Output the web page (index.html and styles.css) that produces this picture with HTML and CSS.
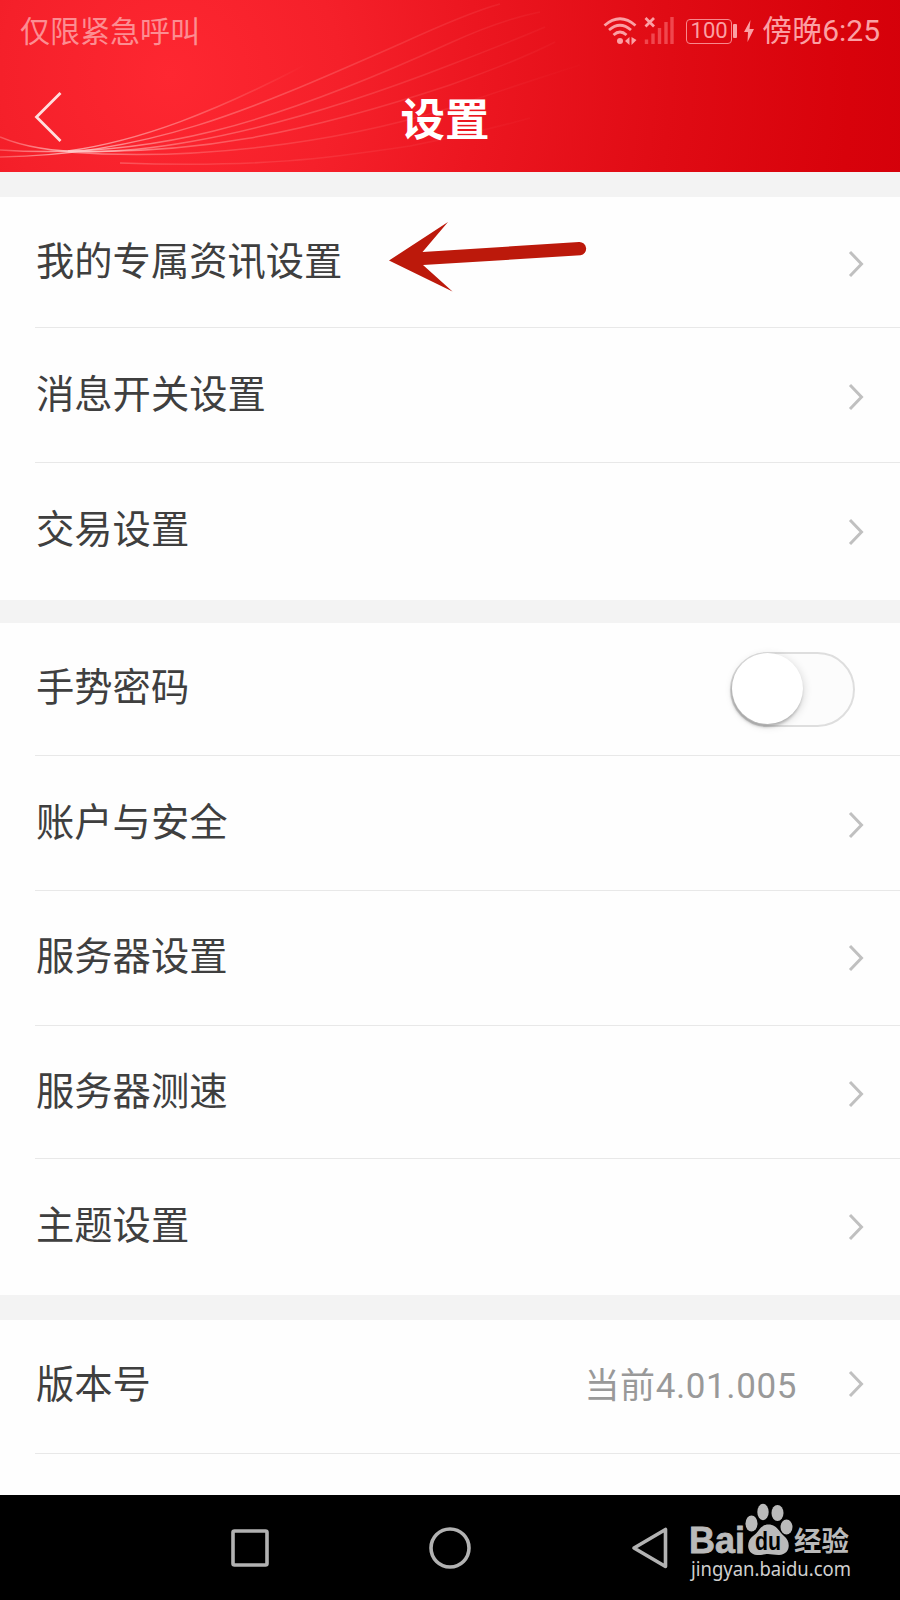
FILE: index.html
```html
<!DOCTYPE html>
<html lang="zh-CN">
<head>
    <meta charset="UTF-8">
    <title>设置</title>
    <link rel="stylesheet" href="styles.css">
</head>
<body>
<svg class="defs" width="0" height="0">
    <symbol id="chevron" viewBox="0 0 16 28">
        <path d="M2 2L13.500 14L2 26" fill="none" stroke="#c0c0c0" stroke-width="3"/>
    </symbol>
</svg>
<div id="phone">
    <div id="header">
        <svg class="waves" width="900" height="172" viewBox="0 0 900 172">
            <defs>
                <linearGradient id="fade" gradientUnits="userSpaceOnUse" x1="0" y1="0" x2="600" y2="0">
                    <stop offset="0" stop-color="#ffb0b0" stop-opacity=".35"/>
                    <stop offset=".12" stop-color="#ffc8c8" stop-opacity=".85"/>
                    <stop offset=".3" stop-color="#ff9a9a" stop-opacity=".55"/>
                    <stop offset=".65" stop-color="#ff8080" stop-opacity=".25"/>
                    <stop offset="1" stop-color="#ff8080" stop-opacity="0"/>
                </linearGradient>
                <linearGradient id="fade2" gradientUnits="userSpaceOnUse" x1="60" y1="0" x2="305" y2="0">
                    <stop offset="0" stop-color="#ffc8c8" stop-opacity=".8"/>
                    <stop offset=".5" stop-color="#ffa0a0" stop-opacity=".55"/>
                    <stop offset="1" stop-color="#ff8080" stop-opacity="0"/>
                </linearGradient>
            </defs>
            <g fill="none" stroke="url(#fade)" stroke-width="1.5">
                <path d="M68 151C140 141 215 112 305 65" stroke="url(#fade2)"/>
                <path d="M0 157C150 155 250 110 400 44Q470 12 500 4"/>
                <path d="M0 150C150 160 270 125 450 43Q500 20 540 12"/>
                <path d="M0 137C90 175 270 135 450 65Q510 42 545 27"/>
                <path d="M68 151C190 155 300 135 450 85Q520 60 555 42"/>
                <path d="M68 152C190 161 330 145 450 108Q520 84 580 65" opacity=".7"/>
                <path d="M120 163C260 168 330 158 410 146Q480 132 530 118" opacity=".5"/>
            </g>
        </svg>
        <div class="status">
            <span class="carrier">仅限紧急呼叫</span>
            <div class="tray">
                <svg width="76" height="32" viewBox="0 0 76 32">
                    <g fill="none" stroke="#fba0a4" stroke-width="2.8">
                        <path d="M1.500 10.500Q17 -3 32.500 10.500"/>
                        <path d="M6 15Q17 5.500 28 15"/>
                        <path d="M10.500 20Q17 14 23.500 20"/>
                    </g>
                    <circle cx="17" cy="26" r="3" fill="#fba0a4"/>
                    <path d="M22 26L26.500 22V30ZM28.500 22L33.500 25L28.500 30Z" fill="#fba0a4"/>
                    <path d="M42.500 3L51 11.500M51 3L42.500 11.500" stroke="#fba0a4" stroke-width="2.8"/>
                    <path d="M43.500 24.500V29M50 18.500V29M56.500 13V29M63 7V29M69 2V29" stroke="#f0474e" stroke-width="3.4"/>
                </svg>
                <span class="battery">100</span>
                <span class="cap"></span>
                <svg class="bolt" width="10" height="22" viewBox="0 0 10 22"><path d="M6.500 0L0 12H4L3.500 22L10 9H5.500Z" fill="#fba0a4"/></svg>
                <span class="time">傍晚6:25</span>
            </div>
        </div>
        <div class="bar">
            <svg class="back" width="30" height="54" viewBox="0 0 30 54"><path d="M26.500 3L2.500 27L26.500 51" fill="none" stroke="#ffdede" stroke-width="2.8"/></svg>
            <h1>设置</h1>
        </div>
    </div>

    <div class="group g1">
        <div class="row low"><span class="label">我的专属资讯设置</span><svg class="arrow"><use href="#chevron"/></svg></div>
        <div class="row mid low"><span class="label">消息开关设置</span><svg class="arrow"><use href="#chevron"/></svg></div>
        <div class="row last"><span class="label">交易设置</span><svg class="arrow"><use href="#chevron"/></svg></div>
    </div>
    <div class="group g2">
        <div class="row"><span class="label">手势密码</span><span class="switch"><i class="knob"></i></span></div>
        <div class="row mid low"><span class="label">账户与安全</span><svg class="arrow"><use href="#chevron"/></svg></div>
        <div class="row mid"><span class="label">服务器设置</span><svg class="arrow"><use href="#chevron"/></svg></div>
        <div class="row low"><span class="label">服务器测速</span><svg class="arrow"><use href="#chevron"/></svg></div>
        <div class="row last"><span class="label">主题设置</span><svg class="arrow"><use href="#chevron"/></svg></div>
    </div>
    <div class="group g3">
        <div class="row"><span class="label">版本号</span><span class="value">当前4.01.005</span><svg class="arrow"><use href="#chevron"/></svg></div>
    </div>

    <div id="nav">
        <svg width="44" height="44" viewBox="0 0 44 44"><rect x="5" y="5" width="34" height="34" rx="1.500"/></svg>
        <svg width="44" height="44" viewBox="0 0 44 44"><circle cx="22" cy="22" r="19"/></svg>
        <svg width="44" height="44" viewBox="0 0 44 44"><path d="M6 22L37.500 3.500V40.500Z" stroke-linejoin="round"/></svg>
    </div>

    <!-- red pointer over the first row -->
    <svg class="pointer" width="210" height="80" viewBox="385 215 210 80">
        <path d="M389 260.500L448 222L422.500 252L579 242A6.700 6.700 0 0 1 580.500 255.300L423 265L452.500 291.500Z"/>
    </svg>

    <svg class="watermark" width="170" height="84" viewBox="685 1500 170 84">
        <text class="bai" x="689" y="1553" textLength="56" lengthAdjust="spacingAndGlyphs">Bai</text>
        <ellipse cx="751.500" cy="1523.500" rx="6" ry="8"/>
        <ellipse cx="763" cy="1512" rx="5.700" ry="8.200"/>
        <ellipse cx="777.500" cy="1513" rx="6" ry="8"/>
        <ellipse cx="786.500" cy="1527" rx="6" ry="7.500"/>
        <path d="M768.500 1524.500C777 1524.500 779 1532 784 1536C791 1541 791 1554.500 779 1555C774 1555 771 1554 768 1554C765 1554 762 1555 757 1555C746 1554 746 1541 753 1536C759 1532 760 1524.500 768.500 1524.500Z"/>
        <text class="du" x="755" y="1550" textLength="26" lengthAdjust="spacingAndGlyphs">du</text>
        <text class="jy" x="794" y="1551" textLength="55" lengthAdjust="spacingAndGlyphs">经验</text>
        <text class="url" x="691" y="1575.500" textLength="160" lengthAdjust="spacingAndGlyphs">jingyan.baidu.com</text>
    </svg>
</div>
</body>
</html>
```
FILE: styles.css
```css
*
{
    margin: 0;
    padding: 0;
    box-sizing: border-box;
}
body
{
    font-family: Roboto, "Noto Sans CJK SC", sans-serif;
    background-color: #fefefe;
}
.defs
{
    position: absolute;
}
#phone
{
    position: relative;
    display: flex;
    flex-direction: column;
    width: 900px;
    height: 1600px;
    overflow: hidden;
    background-color: #fefefe;
}
#header
{
    position: relative;
    height: 197px;
    border-bottom: 25px solid #f3f3f3;
    background: radial-gradient(circle at 170px 75px, #fe2731 0, #f5202a 170px, #ec1620 310px, #e00b14 500px, #d8020b 680px, #d4000a 760px) padding-box;
}
.waves
{
    position: absolute;
    left: 0;
    top: 0;
}
.status
{
    position: relative;
    display: flex;
    justify-content: space-between;
    height: 62px;
    padding: 0 20px;
    line-height: 62px;
    font-size: 30px;
    color: #fba0a4;
}
.carrier
{
    padding-top: 1px;
    color: #fc8d92;
}
.time
{
    margin-left: 8px;
}
.tray
{
    display: flex;
    align-items: center;
}
.battery
{
    width: 46px;
    height: 25px;
    margin-left: 7px;
    border: 1.5px solid #f8888d;
    border-radius: 4px;
    font-size: 22px;
    line-height: 22px;
    text-align: center;
}
.cap
{
    width: 4px;
    height: 14px;
    margin-left: 1px;
    border-radius: 1px;
    background-color: #fba0a4;
}
.bolt
{
    margin-left: 7px;
}
.bar
{
    position: relative;
    display: flex;
    align-items: center;
    height: 110px;
    padding-left: 34px;
}
h1
{
    flex: 1;
    padding-top: 7px;
    margin-right: 74px;
    text-align: center;
    font-size: 44.5px;
    line-height: 60px;
    font-weight: 700;
    color: #fff;
}
.group
{
    padding-left: 35px;
}
.g1, .g2
{
    border-bottom: 23px solid #f3f3f3;
}
.g2
{
    border-bottom-width: 25px;
}
.row
{
    display: flex;
    align-items: center;
    height: 133px;
    padding-right: 36px;
    border-bottom: 1px solid #e8e8e8;
}
.g1 .row:first-child
{
    height: 131px;
}
.g3 .row
{
    height: 134px;
}
.mid
{
    height: 135px;
}
.last
{
    height: 137px;
    border-bottom: none;
}
.low
{
    padding-top: 3px;
}
.g2 .last
{
    height: 136px;
}
.label
{
    flex: 1;
    padding: 0 0 3px 1px;
    font-size: 38.3px;
    line-height: 56px;
    color: #3f3f3f;
}
.value
{
    margin-right: 51px;
    font-size: 35px;
    line-height: 50px;
    letter-spacing: .6px;
    color: #999;
}
.arrow
{
    width: 16px;
    height: 28px;
}
.g3 .arrow
{
    margin-bottom: 6px;
}
.switch
{
    width: 125px;
    height: 75px;
    margin-right: 9px;
    border: 2px solid #dedede;
    border-radius: 38px;
    background-color: #fcfcfc;
}
.knob
{
    display: block;
    width: 71px;
    height: 71px;
    margin-top: -1px;
    border-radius: 50%;
    background-color: #fff;
    box-shadow: -1px 3px 3px rgba(0, 0, 0, .22), 1px 2px 8px rgba(0, 0, 0, .15);
}
#nav
{
    display: flex;
    justify-content: center;
    gap: 156px;
    height: 105px;
    margin-top: auto;
    padding-top: 30.5px;
    background-color: #000;
}
#nav svg
{
    fill: none;
    stroke: #b2b2b2;
    stroke-width: 3.6px;
}
.pointer
{
    position: absolute;
    left: 385px;
    top: 215px;
    fill: #bc190b;
}
.watermark
{
    position: absolute;
    left: 685px;
    top: 1500px;
    fill: #bababa;
}
.bai
{
    font: 700 36px "Liberation Sans", sans-serif;
    stroke: #bababa;
    stroke-width: .8px;
}
.du
{
    font: 700 25px "Liberation Sans", sans-serif;
    fill: #000;
}
.jy
{
    font: 700 27px "Noto Sans CJK SC", sans-serif;
}
.url
{
    font: 400 20px "Noto Sans", sans-serif;
    fill: #d0d0d0;
}
```
